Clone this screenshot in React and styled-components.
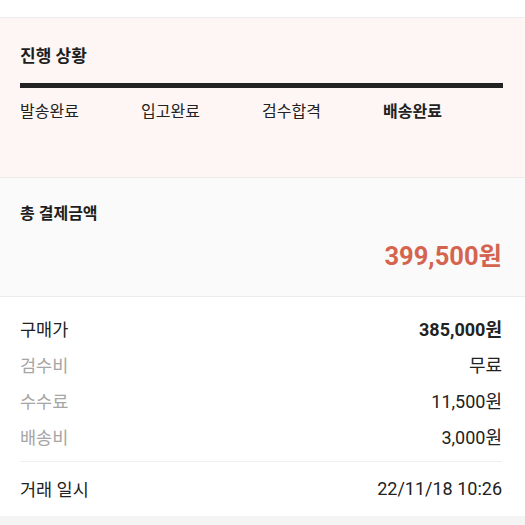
import React from "react"
import styled, { createGlobalStyle } from "styled-components"

const GlobalStyle = createGlobalStyle`
  body {
    margin: 0;
    background: #ffffff;
    font-family: Roboto, "Noto Sans CJK KR", sans-serif;
    color: #222222;
  }
`

const Page = styled.div`
  width: 525px;
  height: 525px;
  overflow: hidden;
  padding-top: 17px;
  box-sizing: border-box;
`

const Progress = styled.section`
  background: #fdf6f4;
  border-top: 1px solid #efeceb;
  border-bottom: 1px solid #f0eceb;
  height: 161px;
  box-sizing: border-box;
  padding: 27px 22px 0 20px;
`

const SectionTitle = styled.h2`
  margin: 0;
  font-size: ${p => p.$size || 17}px;
  line-height: 22px;
  font-weight: 700;
  color: #1e1e1e;
`

const Bar = styled.div`
  margin-top: 16px;
  height: 5px;
  background: #222222;
`

const Steps = styled.div`
  display: grid;
  grid-template-columns: repeat(4, 121px);
  margin-top: 14px;
`

const Step = styled.span`
  font-size: 16px;
  line-height: 20px;
  font-weight: ${p => (p.$active ? 700 : 400)};
  color: #222222;
`

const Total = styled.section`
  background: #fafafa;
  border-bottom: 1px solid #ececec;
  height: 119px;
  box-sizing: border-box;
  padding: 25px 23px 0 20px;
  display: flex;
  flex-direction: column;
`

const Amount = styled.div`
  margin-top: 16px;
  align-self: flex-end;
  font-size: 25.5px;
  line-height: 30px;
  font-weight: 700;
  color: #d5644f;
`

const Details = styled.section`
  padding: 13px 23px 10px 20px;
`

const Row = styled.div`
  display: flex;
  justify-content: space-between;
  align-items: center;
  height: 36px;
`

const Label = styled.span`
  font-size: 17.5px;
  color: ${p => (p.$muted ? "#a6a6a6" : "#222222")};
`

const Value = styled.span`
  font-size: 18px;
  font-weight: ${p => (p.$bold ? 700 : 400)};
  color: #222222;
`

const Divider = styled.hr`
  border: 0;
  border-top: 1px solid #efefef;
  margin: 7px 0 8px;
`

const Footer = styled.div`
  height: 20px;
  background: #f4f4f4;
`

const steps = ["발송완료", "입고완료", "검수합격", "배송완료"]

const fees = [
  { label: "구매가", value: "385,000원", bold: true },
  { label: "검수비", value: "무료", muted: true },
  { label: "수수료", value: "11,500원", muted: true },
  { label: "배송비", value: "3,000원", muted: true },
]

export default function App() {
  return (
    <Page>
      <GlobalStyle />
      <Progress>
        <SectionTitle>진행 상황</SectionTitle>
        <Bar />
        <Steps>
          {steps.map((s, i) => (
            <Step key={s} $active={i === steps.length - 1}>
              {s}
            </Step>
          ))}
        </Steps>
      </Progress>
      <Total>
        <SectionTitle $size={16}>총 결제금액</SectionTitle>
        <Amount>399,500원</Amount>
      </Total>
      <Details>
        {fees.map(f => (
          <Row key={f.label}>
            <Label $muted={f.muted}>{f.label}</Label>
            <Value $bold={f.bold}>{f.value}</Value>
          </Row>
        ))}
        <Divider />
        <Row>
          <Label>거래 일시</Label>
          <Value>22/11/18 10:26</Value>
        </Row>
      </Details>
      <Footer />
    </Page>
  )
}
